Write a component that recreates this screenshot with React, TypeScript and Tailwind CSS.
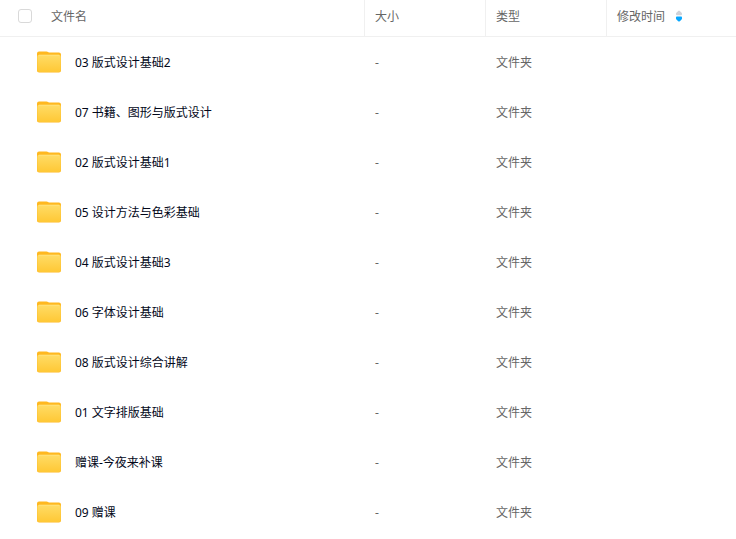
import { useState } from 'react';

type Folder = { id: number; name: string };

const FOLDERS: Folder[] = [
  { id: 1, name: '03 版式设计基础2' },
  { id: 2, name: '07 书籍、图形与版式设计' },
  { id: 3, name: '02 版式设计基础1' },
  { id: 4, name: '05 设计方法与色彩基础' },
  { id: 5, name: '04 版式设计基础3' },
  { id: 6, name: '06 字体设计基础' },
  { id: 7, name: '08 版式设计综合讲解' },
  { id: 8, name: '01 文字排版基础' },
  { id: 9, name: '赠课-今夜来补课' },
  { id: 10, name: '09 赠课' },
];

export default function App() {
  const [allChecked, setAllChecked] = useState(false);
  const [descending, setDescending] = useState(true);

  return (
    <main className="min-h-screen bg-white font-['Noto_Sans','Noto_Sans_CJK_SC',sans-serif] text-xs">
      <table className="w-full table-fixed border-separate border-spacing-0 text-left">
        <colgroup>
          <col />
          <col className="w-[121px]" />
          <col className="w-[121px]" />
          <col className="w-[129px]" />
        </colgroup>
        <thead className="text-[#666666]">
          <tr className="h-[37px]">
            <th className="border-r border-b border-[#f0f0f0] p-0 pb-0.5 pl-[18px] font-normal">
              <div className="flex items-center gap-[19px]">
                <input
                  type="checkbox"
                  aria-label="全选"
                  checked={allChecked}
                  onChange={(e) => setAllChecked(e.target.checked)}
                  className="mb-0.5 size-3.5 appearance-none rounded-[3px] border border-[#d9d9d9] bg-white checked:border-[#06a7ff] checked:bg-[#06a7ff]"
                />
                文件名
              </div>
            </th>
            <th className="border-r border-b border-[#f0f0f0] p-0 pb-0.5 pl-2.5 font-normal">大小</th>
            <th className="border-r border-b border-[#f0f0f0] p-0 pb-0.5 pl-2.5 font-normal">类型</th>
            <th className="border-b border-[#f0f0f0] p-0 pb-0.5 pl-2.5 font-normal">
              <button
                type="button"
                onClick={() => setDescending((d) => !d)}
                className="flex items-center gap-2.5"
              >
                修改时间
                <SortIcon descending={descending} />
              </button>
            </th>
          </tr>
        </thead>
        <tbody>
          {FOLDERS.map((folder) => (
            <FolderRow key={folder.id} folder={folder} />
          ))}
        </tbody>
      </table>
    </main>
  );
}

function FolderRow({ folder }: { folder: Folder }) {
  return (
    <tr className="h-[50px] text-[#666666] hover:bg-[#f7f9fc]">
      <td className="p-0 pl-9">
        <a href="#" className="flex items-center gap-[13px] text-[#03081a]">
          <FolderIcon />
          <span className="pt-0.5">{folder.name}</span>
        </a>
      </td>
      <td className="p-0 pt-0.5 pl-2.5">-</td>
      <td className="p-0 pt-0.5 pl-2.5">文件夹</td>
      <td className="p-0" />
    </tr>
  );
}

function SortIcon({ descending }: { descending: boolean }) {
  return (
    <svg width="8" height="12" viewBox="0 0 8 12" className="mb-0.5" aria-hidden="true">
      <path
        d="M3.2 1 1.4 2.800C.6 3.700.9 5.200 1.900 5.200h4.200c1 0 1.300-1.500.5-2.400L4.800 1a1.100 1.100 0 0 0-1.600 0z"
        fill={descending ? '#d0d2d8' : '#06a7ff'}
      />
      <path
        d="M3.200 11.200 1.400 9.400C.6 8.500.9 6.600 1.900 6.600h4.200c1 0 1.300 1.900.5 2.800l-1.800 1.800a1.100 1.100 0 0 1-1.600 0z"
        fill={descending ? '#06a7ff' : '#d0d2d8'}
      />
    </svg>
  );
}

function FolderIcon() {
  return (
    <svg width="26" height="26" viewBox="0 0 26 26" className="shrink-0" aria-hidden="true">
      <defs>
        <linearGradient id="folder-front" x1="0" y1="0" x2="0" y2="1">
          <stop offset="0" stopColor="#ffdc66" />
          <stop offset="1" stopColor="#ffc835" />
        </linearGradient>
      </defs>
      <path
        d="M1 4.400A2 2 0 0 1 3 2.400h7.400c.7 0 1.200.2 1.700.6l.8.500h10A2.100 2.100 0 0 1 25 5.600V21.500A2.100 2.100 0 0 1 22.900 23.600H3.100A2.100 2.100 0 0 1 1 21.500z"
        fill="#ffb820"
      />
      <path
        d="M1.300 7.800A2 2 0 0 1 3.300 5.800h19.400a2 2 0 0 1 2 2V21a2 2 0 0 1-2 2H3.300a2 2 0 0 1-2-2z"
        fill="url(#folder-front)"
      />
      <path d="M2.800 6.300h20.400" stroke="#ffe58c" strokeWidth="0.6" />
    </svg>
  );
}
